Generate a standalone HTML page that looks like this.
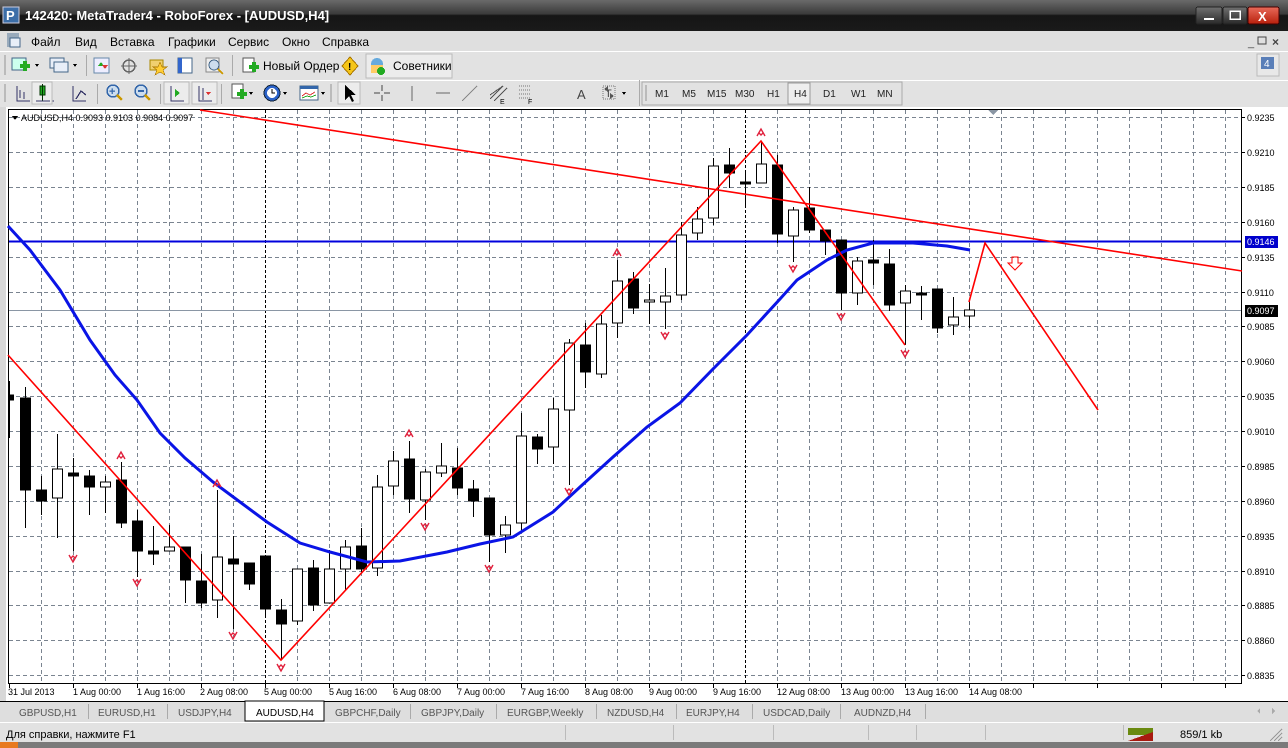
<!DOCTYPE html>
<html><head><meta charset="utf-8"><style>
html,body{margin:0;padding:0;width:1288px;height:748px;overflow:hidden;background:#d4d0c8}
svg{display:block}
text{font-family:"Liberation Sans","DejaVu Sans",sans-serif}
</style></head><body>
<svg width="1288" height="748" viewBox="0 0 1288 748" xmlns="http://www.w3.org/2000/svg" shape-rendering="crispEdges">
<defs>
<linearGradient id="tg" x1="0" y1="0" x2="0" y2="1"><stop offset="0" stop-color="#6a6a6a"/><stop offset="0.45" stop-color="#3a3a3a"/><stop offset="0.5" stop-color="#151515"/><stop offset="1" stop-color="#1a1a1a"/></linearGradient>
<linearGradient id="rb" x1="0" y1="0" x2="0" y2="1"><stop offset="0" stop-color="#e86a5a"/><stop offset="1" stop-color="#b8200c"/></linearGradient>
<linearGradient id="gb" x1="0" y1="0" x2="0" y2="1"><stop offset="0" stop-color="#707070"/><stop offset="1" stop-color="#2a2a2a"/></linearGradient>
</defs>
<!-- title bar -->
<rect x="0" y="0" width="1288" height="31" fill="url(#tg)"/>
<rect x="3" y="7" width="16" height="16" fill="#3c6ea8" stroke="#ccd" />
<text x="6" y="20" font-size="13" font-weight="bold" fill="#fff">P</text>
<text x="25" y="20" font-size="13" font-weight="bold" fill="#fff">142420: MetaTrader4 - RoboForex - [AUDUSD,H4]</text>
<rect x="1196" y="7" width="26" height="17" rx="2" fill="url(#gb)" stroke="#222"/>
<rect x="1204" y="18" width="10" height="2" fill="#fff"/>
<rect x="1223" y="7" width="24" height="17" rx="2" fill="url(#gb)" stroke="#222"/>
<rect x="1230" y="11" width="10" height="8" fill="none" stroke="#fff" stroke-width="1.5"/>
<rect x="1248" y="7" width="31" height="17" rx="2" fill="url(#rb)" stroke="#400"/>
<text x="1258" y="21" font-size="13" font-weight="bold" fill="#fff">X</text>
<!-- menu -->
<rect x="0" y="31" width="1288" height="20" fill="#dfdfdf"/>
<rect x="7" y="33" width="12" height="14" fill="#9ab" /><rect x="10" y="38" width="10" height="9" fill="#e8eef8" stroke="#468"/>
<g font-size="12" fill="#000">
<text x="31" y="46">Файл</text><text x="75" y="46">Вид</text><text x="110" y="46">Вставка</text><text x="168" y="46">Графики</text><text x="228" y="46">Сервис</text><text x="282" y="46">Окно</text><text x="322" y="46">Справка</text>
</g>
<text x="1248" y="46" font-size="11" fill="#444">_</text>
<rect x="1258" y="37" width="8" height="7" fill="none" stroke="#444"/>
<text x="1272" y="46" font-size="12" font-weight="bold" fill="#444">×</text>
<!-- toolbar 1 -->
<rect x="0" y="51" width="1288" height="29" fill="#e2e2e2"/>
<line x1="0" y1="51.5" x2="1288" y2="51.5" stroke="#fff"/>
<rect x="4" y="55" width="2" height="20" fill="#bbb"/>
<rect x="12" y="58" width="14" height="12" fill="#cfe" stroke="#468"/><rect x="20" y="64" width="10" height="4" fill="#2a2"/><rect x="23" y="61" width="4" height="10" fill="#2a2"/>
<path d="M35 64 l4 0 l-2 3z" fill="#000"/>
<rect x="50" y="58" width="14" height="10" fill="#e8eef8" stroke="#468"/><rect x="54" y="62" width="14" height="10" fill="#e8eef8" stroke="#468"/>
<path d="M73 64 l4 0 l-2 3z" fill="#000"/>
<rect x="86" y="55" width="1" height="21" fill="#aaa"/>
<rect x="94" y="58" width="15" height="15" fill="#eef" stroke="#68a"/><path d="M98 66 l3 -4 l3 4z" fill="#2a2"/><path d="M102 65 l3 4 l3 -4z" fill="#d33"/>
<circle cx="129" cy="66" r="6" fill="none" stroke="#666" stroke-width="1.5"/><line x1="121" y1="66" x2="137" y2="66" stroke="#666"/><line x1="129" y1="58" x2="129" y2="74" stroke="#666"/>
<rect x="150" y="60" width="13" height="10" fill="#f0d070" stroke="#a80"/><path d="M160 62 l2 5 5 0 -4 3 2 5 -5 -3 -5 3 2 -5 -4 -3 5 0z" fill="#fc3" stroke="#a70" stroke-width=".6"/>
<rect x="178" y="58" width="14" height="15" fill="#fff" stroke="#468"/><rect x="178" y="58" width="4" height="15" fill="#36c"/>
<rect x="206" y="58" width="13" height="14" fill="#eee" stroke="#888"/><circle cx="214" cy="65" r="5" fill="#cde" stroke="#468"/><line x1="218" y1="69" x2="223" y2="74" stroke="#c90" stroke-width="2"/>
<rect x="232" y="55" width="1" height="21" fill="#aaa"/>
<rect x="243" y="58" width="11" height="14" fill="#fff" stroke="#555"/><rect x="249" y="65" width="10" height="4" fill="#2a2"/><rect x="252" y="62" width="4" height="10" fill="#2a2"/>
<text x="263" y="70" font-size="12">Новый Ордер</text>
<path d="M350 57 l8 9 -8 9 -8 -9z" fill="#f5c518" stroke="#a70"/><text x="348" y="70" font-size="10" font-weight="bold">!</text>
<rect x="366" y="54" width="86" height="24" fill="#ececec" stroke="#bbb"/>
<circle cx="377" cy="64" r="6" fill="#6ad"/><rect x="371" y="65" width="12" height="8" fill="#fc6"/><circle cx="381" cy="71" r="4" fill="#2a2"/>
<text x="393" y="70" font-size="12">Советники</text>
<rect x="1257" y="54" width="22" height="22" fill="#e8e8e8" stroke="#bbb"/><rect x="1261" y="57" width="13" height="12" fill="#5a7fb8"/><text x="1264" y="67" font-size="10" fill="#fff">4</text>
<!-- toolbar 2 -->
<rect x="0" y="80" width="1288" height="27" fill="#e2e2e2"/>
<line x1="0" y1="80.5" x2="1288" y2="80.5" stroke="#fff"/>
<rect x="4" y="84" width="2" height="18" fill="#bbb"/>
<g stroke="#336" fill="none" stroke-width="1.3">
<path d="M17 86 v15 h13 M20 98 v-8 M24 92 v7"/>
<path d="M41 86 v15 h13"/><path d="M73 86 v15 h13 M76 99 l5 -8 5 4"/>
</g>
<rect x="32" y="82" width="20" height="22" fill="#ececec" stroke="#bbb"/><rect x="40" y="86" width="5" height="9" fill="#2a2" stroke="#030"/><line x1="42.5" y1="84" x2="42.5" y2="101" stroke="#030"/><line x1="36" y1="101" x2="50" y2="101" stroke="#336"/>
<rect x="97" y="84" width="1" height="20" fill="#aaa"/>
<circle cx="113" cy="91" r="6" fill="#cde" stroke="#36a" stroke-width="1.5"/><line x1="117" y1="95" x2="122" y2="100" stroke="#c90" stroke-width="2.5"/><text x="109" y="95" font-size="11" font-weight="bold" fill="#36a">+</text>
<circle cx="141" cy="91" r="6" fill="#cde" stroke="#36a" stroke-width="1.5"/><line x1="145" y1="95" x2="150" y2="100" stroke="#c90" stroke-width="2.5"/><rect x="138" y="90" width="6" height="2" fill="#36a"/>
<rect x="160" y="84" width="1" height="20" fill="#aaa"/>
<rect x="164" y="82" width="25" height="22" fill="#ececec" stroke="#bbb"/><path d="M171 86 v15 h13" stroke="#336" fill="none" stroke-width="1.3"/><path d="M175 89 l5 4 -5 4z" fill="#2a2"/>
<rect x="192" y="82" width="25" height="22" fill="#ececec" stroke="#bbb"/><path d="M199 86 v15 h13 M203 88 v12" stroke="#336" fill="none" stroke-width="1.3"/><path d="M206 92 l5 0 -3 3z" fill="#d33"/>
<rect x="221" y="84" width="1" height="20" fill="#aaa"/>
<rect x="232" y="84" width="11" height="14" fill="#fff" stroke="#555"/><rect x="237" y="92" width="10" height="4" fill="#2a2"/><rect x="240" y="89" width="4" height="10" fill="#2a2"/><path d="M249 92 l4 0 -2 3z"/>
<circle cx="272" cy="93" r="8" fill="#2b62c8" stroke="#123"/><circle cx="272" cy="93" r="5" fill="#fff"/><path d="M272 89 v4 h3" stroke="#000" fill="none"/><path d="M283 92 l4 0 -2 3z"/>
<rect x="300" y="86" width="18" height="14" fill="#fff" stroke="#468"/><rect x="300" y="86" width="18" height="3" fill="#36a"/><path d="M302 96 l4 -3 4 2 5 -3" stroke="#d33" fill="none"/><path d="M302 98 l5 -2 4 1 5 -2" stroke="#2a2" fill="none"/><path d="M321 92 l4 0 -2 3z"/>
<rect x="330" y="84" width="2" height="18" fill="#bbb"/>
<rect x="338" y="82" width="22" height="22" fill="#ececec" stroke="#bbb"/><path d="M345 85 v15 l4 -4 3 6 2 -1 -3 -6 5 0z" fill="#000"/>
<path d="M374 93 h6 m4 0 h6 M382 85 v6 m0 4 v6" stroke="#444"/>
<line x1="412" y1="86" x2="412" y2="101" stroke="#666"/>
<line x1="436" y1="93" x2="450" y2="93" stroke="#666"/>
<line x1="462" y1="101" x2="477" y2="86" stroke="#888"/>
<path d="M490 99 l13 -13 M494 101 l13 -13 M490 95 l13 -9" stroke="#555"/><text x="500" y="104" font-size="7">E</text>
<path d="M519 86 h12 M519 90 h12 M519 94 h12 M519 98 h12" stroke="#777" stroke-dasharray="1 1"/><text x="528" y="104" font-size="7">F</text>
<text x="577" y="99" font-size="13" fill="#444">A</text>
<rect x="603" y="86" width="12" height="13" fill="none" stroke="#777" stroke-dasharray="1 1"/><text x="605" y="97" font-size="11" fill="#444">T</text>
<path d="M606 92 l0 0" /><path d="M604 89 l4 -3 0 6z M614 96 l-4 3 0 -6z" fill="#555"/><path d="M622 92 l4 0 -2 3z"/>
<rect x="639" y="80" width="1" height="26" fill="#aaa"/>
<rect x="642" y="82" width="260" height="23" fill="#e2e2e2" stroke="#aaa"/>
<rect x="645" y="85" width="2" height="16" fill="#bbb"/>
<rect x="788" y="83" width="22" height="21" fill="#eee" stroke="#999"/>
<g font-size="10" fill="#222">
<text x="655" y="97">M1</text><text x="682" y="97">M5</text><text x="707" y="97">M15</text><text x="735" y="97">M30</text><text x="767" y="97">H1</text><text x="794" y="97">H4</text><text x="823" y="97">D1</text><text x="851" y="97">W1</text><text x="877" y="97">MN</text>
</g>
<!-- chart area -->
<rect x="0" y="107" width="1288" height="594" fill="#fff"/>
<rect x="0" y="107" width="6" height="594" fill="#d8d8d8"/>
<rect x="8.5" y="109.5" width="1233" height="574" fill="#fff" stroke="#000"/>
<g stroke="#7a8490" stroke-dasharray="4 3" stroke-width="1">
<line x1="9" y1="117.5" x2="1241" y2="117.5"/><line x1="9" y1="152.5" x2="1241" y2="152.5"/><line x1="9" y1="187.5" x2="1241" y2="187.5"/><line x1="9" y1="222.5" x2="1241" y2="222.5"/><line x1="9" y1="257.5" x2="1241" y2="257.5"/><line x1="9" y1="292.5" x2="1241" y2="292.5"/><line x1="9" y1="326.5" x2="1241" y2="326.5"/><line x1="9" y1="361.5" x2="1241" y2="361.5"/><line x1="9" y1="396.5" x2="1241" y2="396.5"/><line x1="9" y1="431.5" x2="1241" y2="431.5"/><line x1="9" y1="466.5" x2="1241" y2="466.5"/><line x1="9" y1="501.5" x2="1241" y2="501.5"/><line x1="9" y1="536.5" x2="1241" y2="536.5"/><line x1="9" y1="571.5" x2="1241" y2="571.5"/><line x1="9" y1="605.5" x2="1241" y2="605.5"/><line x1="9" y1="640.5" x2="1241" y2="640.5"/><line x1="9" y1="675.5" x2="1241" y2="675.5"/>
<line x1="41.5" y1="110" x2="41.5" y2="683"/><line x1="73.5" y1="110" x2="73.5" y2="683"/><line x1="105.5" y1="110" x2="105.5" y2="683"/><line x1="137.5" y1="110" x2="137.5" y2="683"/><line x1="169.5" y1="110" x2="169.5" y2="683"/><line x1="201.5" y1="110" x2="201.5" y2="683"/><line x1="233.5" y1="110" x2="233.5" y2="683"/><line x1="297.5" y1="110" x2="297.5" y2="683"/><line x1="329.5" y1="110" x2="329.5" y2="683"/><line x1="361.5" y1="110" x2="361.5" y2="683"/><line x1="393.5" y1="110" x2="393.5" y2="683"/><line x1="425.5" y1="110" x2="425.5" y2="683"/><line x1="457.5" y1="110" x2="457.5" y2="683"/><line x1="489.5" y1="110" x2="489.5" y2="683"/><line x1="521.5" y1="110" x2="521.5" y2="683"/><line x1="553.5" y1="110" x2="553.5" y2="683"/><line x1="585.5" y1="110" x2="585.5" y2="683"/><line x1="617.5" y1="110" x2="617.5" y2="683"/><line x1="649.5" y1="110" x2="649.5" y2="683"/><line x1="681.5" y1="110" x2="681.5" y2="683"/><line x1="713.5" y1="110" x2="713.5" y2="683"/><line x1="777.5" y1="110" x2="777.5" y2="683"/><line x1="809.5" y1="110" x2="809.5" y2="683"/><line x1="841.5" y1="110" x2="841.5" y2="683"/><line x1="873.5" y1="110" x2="873.5" y2="683"/><line x1="905.5" y1="110" x2="905.5" y2="683"/><line x1="937.5" y1="110" x2="937.5" y2="683"/><line x1="969.5" y1="110" x2="969.5" y2="683"/><line x1="1001.5" y1="110" x2="1001.5" y2="683"/><line x1="1033.5" y1="110" x2="1033.5" y2="683"/><line x1="1065.5" y1="110" x2="1065.5" y2="683"/><line x1="1097.5" y1="110" x2="1097.5" y2="683"/><line x1="1129.5" y1="110" x2="1129.5" y2="683"/><line x1="1161.5" y1="110" x2="1161.5" y2="683"/><line x1="1193.5" y1="110" x2="1193.5" y2="683"/><line x1="1225.5" y1="110" x2="1225.5" y2="683"/>
</g>
<g stroke="#000" stroke-dasharray="3 2"><line x1="265.5" y1="110" x2="265.5" y2="683"/><line x1="745.5" y1="110" x2="745.5" y2="683"/></g>
<path d="M988 110 h10 l-5 5z" fill="#8a96a4"/>
<!-- price lines -->
<line x1="9" y1="310.5" x2="1241" y2="310.5" stroke="#8a96a4"/>
<line x1="9" y1="241.5" x2="1241" y2="241.5" stroke="#0000dd" stroke-width="2"/>
<!-- candles -->
<g stroke="#000" shape-rendering="crispEdges">
<line x1="9.5" y1="381" x2="9.5" y2="438"/><rect x="8.5" y="395" width="5" height="5" fill="#000"/>
<line x1="25.5" y1="387" x2="25.5" y2="528"/><rect x="20.5" y="398" width="10" height="92" fill="#000"/>
<line x1="41.5" y1="476" x2="41.5" y2="515"/><rect x="36.5" y="490" width="10" height="11" fill="#000"/>
<line x1="57.5" y1="434" x2="57.5" y2="538"/><rect x="52.5" y="469" width="10" height="29" fill="#fff"/>
<line x1="73.5" y1="458" x2="73.5" y2="551"/><rect x="68.5" y="473" width="10" height="3" fill="#000"/>
<line x1="89.5" y1="470" x2="89.5" y2="515"/><rect x="84.5" y="476" width="10" height="11" fill="#000"/>
<line x1="105.5" y1="476" x2="105.5" y2="513"/><rect x="100.5" y="482" width="10" height="5" fill="#fff"/>
<line x1="121.5" y1="462" x2="121.5" y2="528"/><rect x="116.5" y="480" width="10" height="43" fill="#000"/>
<line x1="137.5" y1="510" x2="137.5" y2="577"/><rect x="132.5" y="521" width="10" height="30" fill="#000"/>
<line x1="153.5" y1="526" x2="153.5" y2="565"/><rect x="148.5" y="551" width="10" height="3" fill="#000"/>
<line x1="169.5" y1="525" x2="169.5" y2="551"/><rect x="164.5" y="547" width="10" height="4" fill="#fff"/>
<line x1="185.5" y1="547" x2="185.5" y2="603"/><rect x="180.5" y="547" width="10" height="33" fill="#000"/>
<line x1="201.5" y1="554" x2="201.5" y2="608"/><rect x="196.5" y="581" width="10" height="22" fill="#000"/>
<line x1="217.5" y1="490" x2="217.5" y2="618"/><rect x="212.5" y="557" width="10" height="43" fill="#fff"/>
<line x1="233.5" y1="536" x2="233.5" y2="629"/><rect x="228.5" y="559" width="10" height="5" fill="#000"/>
<line x1="249.5" y1="563" x2="249.5" y2="590"/><rect x="244.5" y="563" width="10" height="21" fill="#000"/>
<line x1="265.5" y1="556" x2="265.5" y2="616"/><rect x="260.5" y="556" width="10" height="53" fill="#000"/>
<line x1="281.5" y1="599" x2="281.5" y2="660"/><rect x="276.5" y="610" width="10" height="14" fill="#000"/>
<line x1="297.5" y1="569" x2="297.5" y2="625"/><rect x="292.5" y="569" width="10" height="52" fill="#fff"/>
<line x1="313.5" y1="560" x2="313.5" y2="611"/><rect x="308.5" y="568" width="10" height="37" fill="#000"/>
<line x1="329.5" y1="550" x2="329.5" y2="603"/><rect x="324.5" y="569" width="10" height="34" fill="#fff"/>
<line x1="345.5" y1="540" x2="345.5" y2="590"/><rect x="340.5" y="547" width="10" height="22" fill="#fff"/>
<line x1="361.5" y1="528" x2="361.5" y2="572"/><rect x="356.5" y="546" width="10" height="23" fill="#000"/>
<line x1="377.5" y1="475" x2="377.5" y2="576"/><rect x="372.5" y="487" width="10" height="81" fill="#fff"/>
<line x1="393.5" y1="451" x2="393.5" y2="495"/><rect x="388.5" y="461" width="10" height="25" fill="#fff"/>
<line x1="409.5" y1="441" x2="409.5" y2="513"/><rect x="404.5" y="459" width="10" height="40" fill="#000"/>
<line x1="425.5" y1="469" x2="425.5" y2="520"/><rect x="420.5" y="472" width="10" height="28" fill="#fff"/>
<line x1="441.5" y1="443" x2="441.5" y2="477"/><rect x="436.5" y="466" width="10" height="7" fill="#fff"/>
<line x1="457.5" y1="448" x2="457.5" y2="495"/><rect x="452.5" y="468" width="10" height="20" fill="#000"/>
<line x1="473.5" y1="480" x2="473.5" y2="517"/><rect x="468.5" y="489" width="10" height="12" fill="#000"/>
<line x1="489.5" y1="498" x2="489.5" y2="562"/><rect x="484.5" y="498" width="10" height="37" fill="#000"/>
<line x1="505.5" y1="516" x2="505.5" y2="553"/><rect x="500.5" y="525" width="10" height="10" fill="#fff"/>
<line x1="521.5" y1="413" x2="521.5" y2="530"/><rect x="516.5" y="436" width="10" height="87" fill="#fff"/>
<line x1="537.5" y1="434" x2="537.5" y2="464"/><rect x="532.5" y="437" width="10" height="12" fill="#000"/>
<line x1="553.5" y1="398" x2="553.5" y2="464"/><rect x="548.5" y="409" width="10" height="38" fill="#fff"/>
<line x1="569.5" y1="339" x2="569.5" y2="485"/><rect x="564.5" y="343" width="10" height="67" fill="#fff"/>
<line x1="585.5" y1="323" x2="585.5" y2="388"/><rect x="580.5" y="345" width="10" height="27" fill="#000"/>
<line x1="601.5" y1="315" x2="601.5" y2="378"/><rect x="596.5" y="324" width="10" height="50" fill="#fff"/>
<line x1="617.5" y1="260" x2="617.5" y2="338"/><rect x="612.5" y="281" width="10" height="42" fill="#fff"/>
<line x1="633.5" y1="272" x2="633.5" y2="314"/><rect x="628.5" y="279" width="10" height="29" fill="#000"/>
<line x1="649.5" y1="284" x2="649.5" y2="324"/><rect x="644.5" y="300" width="10" height="2" fill="#fff"/>
<line x1="665.5" y1="268" x2="665.5" y2="329"/><rect x="660.5" y="296" width="10" height="6" fill="#fff"/>
<line x1="681.5" y1="222" x2="681.5" y2="300"/><rect x="676.5" y="235" width="10" height="60" fill="#fff"/>
<line x1="697.5" y1="207" x2="697.5" y2="240"/><rect x="692.5" y="219" width="10" height="14" fill="#fff"/>
<line x1="713.5" y1="158" x2="713.5" y2="225"/><rect x="708.5" y="166" width="10" height="52" fill="#fff"/>
<line x1="729.5" y1="148" x2="729.5" y2="188"/><rect x="724.5" y="165" width="10" height="8" fill="#000"/>
<line x1="745.5" y1="170" x2="745.5" y2="208"/><rect x="740.5" y="182" width="10" height="2" fill="#000"/>
<line x1="761.5" y1="141" x2="761.5" y2="183"/><rect x="756.5" y="164" width="10" height="19" fill="#fff"/>
<line x1="777.5" y1="155" x2="777.5" y2="243"/><rect x="772.5" y="165" width="10" height="69" fill="#000"/>
<line x1="793.5" y1="207" x2="793.5" y2="262"/><rect x="788.5" y="210" width="10" height="26" fill="#fff"/>
<line x1="809.5" y1="187" x2="809.5" y2="233"/><rect x="804.5" y="208" width="10" height="22" fill="#000"/>
<line x1="825.5" y1="230" x2="825.5" y2="255"/><rect x="820.5" y="230" width="10" height="11" fill="#000"/>
<line x1="841.5" y1="240" x2="841.5" y2="310"/><rect x="836.5" y="240" width="10" height="53" fill="#000"/>
<line x1="857.5" y1="257" x2="857.5" y2="305"/><rect x="852.5" y="261" width="10" height="32" fill="#fff"/>
<line x1="873.5" y1="240" x2="873.5" y2="285"/><rect x="868.5" y="260" width="10" height="3" fill="#000"/>
<line x1="889.5" y1="249" x2="889.5" y2="311"/><rect x="884.5" y="264" width="10" height="41" fill="#000"/>
<line x1="905.5" y1="285" x2="905.5" y2="345"/><rect x="900.5" y="291" width="10" height="12" fill="#fff"/>
<line x1="921.5" y1="286" x2="921.5" y2="320"/><rect x="916.5" y="293" width="10" height="2" fill="#000"/>
<line x1="937.5" y1="289" x2="937.5" y2="333"/><rect x="932.5" y="289" width="10" height="39" fill="#000"/>
<line x1="953.5" y1="297" x2="953.5" y2="335"/><rect x="948.5" y="317" width="10" height="8" fill="#fff"/>
<line x1="969.5" y1="300" x2="969.5" y2="328"/><rect x="964.5" y="310" width="10" height="6" fill="#fff"/>
</g>
<g fill="none" shape-rendering="geometricPrecision">
<!-- MA -->
<path d="M8 226 L30 250 L60 290 L90 340 L115 375 L137 400 L160 433 L185 458 L213 482 L240 502 L267 522 L300 543 L330 552 L367 562 L400 561 L447 552 L480 544 L513 537 L553 512 L580 487 L613 457 L647 427 L680 403 L713 369 L747 335 L780 299 L797 280 L827 260 L847 250 L873 243 L913 243 L947 246 L970 250" stroke="#0a14e6" stroke-width="3"/>
<!-- red lines -->
<g stroke="#f00" stroke-width="1.6">
<line x1="200" y1="110" x2="1242" y2="271"/>
<path d="M8 355 L281 660 L761 141 L905 345"/>
<path d="M969 302 L985 243 L1098 410"/>
</g>
<path d="M1012 257 h6 v6 h4 l-7 7 -7 -7 h4z" stroke="#f00" stroke-width="1"/>
<!-- fractals -->
<g stroke="#e0203c" stroke-width="1.4">
<path d="M117 459 l4 -7 4 7 M119 456 l2 2 2 -2"/>
<path d="M213 487 l4 -7 4 7 M215 484 l2 2 2 -2"/>
<path d="M405 437 l4 -7 4 7 M407 434 l2 2 2 -2"/>
<path d="M613 256 l4 -7 4 7 M615 253 l2 2 2 -2"/>
<path d="M757 136 l4 -7 4 7 M759 133 l2 2 2 -2"/>
<path d="M69 555 l4 7 4 -7 M71 558 l2 -2 2 2"/>
<path d="M133 579 l4 7 4 -7 M135 582 l2 -2 2 2"/>
<path d="M229 632 l4 7 4 -7 M231 635 l2 -2 2 2"/>
<path d="M277 664 l4 7 4 -7 M279 667 l2 -2 2 2"/>
<path d="M421 523 l4 7 4 -7 M423 526 l2 -2 2 2"/>
<path d="M485 565 l4 7 4 -7 M487 568 l2 -2 2 2"/>
<path d="M565 488 l4 7 4 -7 M567 491 l2 -2 2 2"/>
<path d="M661 332 l4 7 4 -7 M663 335 l2 -2 2 2"/>
<path d="M789 265 l4 7 4 -7 M791 268 l2 -2 2 2"/>
<path d="M837 313 l4 7 4 -7 M839 316 l2 -2 2 2"/>
<path d="M901 350 l4 7 4 -7 M903 353 l2 -2 2 2"/>
</g>
</g>
<path d="M12 116 h6 l-3 4z" fill="#000"/>
<text x="21" y="121" font-size="9" fill="#000">AUDUSD,H4  0.9093 0.9103 0.9084 0.9097</text>
<!-- price axis -->
<g stroke="#000"><line x1="1242" y1="117.5" x2="1245" y2="117.5"/><line x1="1242" y1="152.5" x2="1245" y2="152.5"/><line x1="1242" y1="187.5" x2="1245" y2="187.5"/><line x1="1242" y1="222.5" x2="1245" y2="222.5"/><line x1="1242" y1="257.5" x2="1245" y2="257.5"/><line x1="1242" y1="292.5" x2="1245" y2="292.5"/><line x1="1242" y1="326.5" x2="1245" y2="326.5"/><line x1="1242" y1="361.5" x2="1245" y2="361.5"/><line x1="1242" y1="396.5" x2="1245" y2="396.5"/><line x1="1242" y1="431.5" x2="1245" y2="431.5"/><line x1="1242" y1="466.5" x2="1245" y2="466.5"/><line x1="1242" y1="501.5" x2="1245" y2="501.5"/><line x1="1242" y1="536.5" x2="1245" y2="536.5"/><line x1="1242" y1="571.5" x2="1245" y2="571.5"/><line x1="1242" y1="605.5" x2="1245" y2="605.5"/><line x1="1242" y1="640.5" x2="1245" y2="640.5"/><line x1="1242" y1="675.5" x2="1245" y2="675.5"/></g>
<g font-size="9" fill="#000">
<text x="1247" y="121">0.9235</text><text x="1247" y="156">0.9210</text><text x="1247" y="191">0.9185</text><text x="1247" y="226">0.9160</text><text x="1247" y="261">0.9135</text><text x="1247" y="296">0.9110</text><text x="1247" y="330">0.9085</text><text x="1247" y="365">0.9060</text><text x="1247" y="400">0.9035</text><text x="1247" y="435">0.9010</text><text x="1247" y="470">0.8985</text><text x="1247" y="505">0.8960</text><text x="1247" y="540">0.8935</text><text x="1247" y="575">0.8910</text><text x="1247" y="609">0.8885</text><text x="1247" y="644">0.8860</text><text x="1247" y="679">0.8835</text>
</g>
<rect x="1245" y="236" width="33" height="12" fill="#0000cc"/><text x="1247" y="245" font-size="9" fill="#fff">0.9146</text>
<rect x="1245" y="305" width="33" height="12" fill="#000"/><text x="1247" y="314" font-size="9" fill="#fff">0.9097</text>
<!-- date axis -->
<g stroke="#000"><line x1="9.5" y1="684" x2="9.5" y2="688"/><line x1="73.5" y1="684" x2="73.5" y2="688"/><line x1="137.5" y1="684" x2="137.5" y2="688"/><line x1="201.5" y1="684" x2="201.5" y2="688"/><line x1="265.5" y1="684" x2="265.5" y2="688"/><line x1="329.5" y1="684" x2="329.5" y2="688"/><line x1="393.5" y1="684" x2="393.5" y2="688"/><line x1="457.5" y1="684" x2="457.5" y2="688"/><line x1="521.5" y1="684" x2="521.5" y2="688"/><line x1="585.5" y1="684" x2="585.5" y2="688"/><line x1="649.5" y1="684" x2="649.5" y2="688"/><line x1="713.5" y1="684" x2="713.5" y2="688"/><line x1="777.5" y1="684" x2="777.5" y2="688"/><line x1="841.5" y1="684" x2="841.5" y2="688"/><line x1="905.5" y1="684" x2="905.5" y2="688"/><line x1="969.5" y1="684" x2="969.5" y2="688"/><line x1="1033.5" y1="684" x2="1033.5" y2="688"/><line x1="1097.5" y1="684" x2="1097.5" y2="688"/><line x1="1161.5" y1="684" x2="1161.5" y2="688"/><line x1="1225.5" y1="684" x2="1225.5" y2="688"/></g>
<g font-size="9" fill="#000">
<text x="8" y="695">31 Jul 2013</text><text x="73" y="695">1 Aug 00:00</text><text x="137" y="695">1 Aug 16:00</text><text x="200" y="695">2 Aug 08:00</text><text x="264" y="695">5 Aug 00:00</text><text x="329" y="695">5 Aug 16:00</text><text x="393" y="695">6 Aug 08:00</text><text x="457" y="695">7 Aug 00:00</text><text x="521" y="695">7 Aug 16:00</text><text x="585" y="695">8 Aug 08:00</text><text x="649" y="695">9 Aug 00:00</text><text x="713" y="695">9 Aug 16:00</text><text x="777" y="695">12 Aug 08:00</text><text x="841" y="695">13 Aug 00:00</text><text x="905" y="695">13 Aug 16:00</text><text x="969" y="695">14 Aug 08:00</text>
</g>
<!-- tabs -->
<rect x="0" y="701" width="1288" height="21" fill="#dedede"/>
<line x1="0" y1="701.5" x2="1288" y2="701.5" stroke="#000"/>
<rect x="245" y="701" width="79" height="20" fill="#fff" stroke="#000"/>
<g stroke="#aaa"><line x1="88.5" y1="704" x2="88.5" y2="719"/><line x1="167.5" y1="704" x2="167.5" y2="719"/><line x1="410.5" y1="704" x2="410.5" y2="719"/><line x1="496.5" y1="704" x2="496.5" y2="719"/><line x1="596.5" y1="704" x2="596.5" y2="719"/><line x1="676.5" y1="704" x2="676.5" y2="719"/><line x1="752.5" y1="704" x2="752.5" y2="719"/><line x1="840.5" y1="704" x2="840.5" y2="719"/><line x1="925.5" y1="704" x2="925.5" y2="719"/></g>
<g font-size="10" fill="#555">
<text x="19" y="716">GBPUSD,H1</text><text x="98" y="716">EURUSD,H1</text><text x="178" y="716">USDJPY,H4</text><text x="256" y="716" fill="#000">AUDUSD,H4</text><text x="335" y="716">GBPCHF,Daily</text><text x="421" y="716">GBPJPY,Daily</text><text x="507" y="716">EURGBP,Weekly</text><text x="607" y="716">NZDUSD,H4</text><text x="686" y="716">EURJPY,H4</text><text x="763" y="716">USDCAD,Daily</text><text x="854" y="716">AUDNZD,H4</text>
</g>
<path d="M1260 708 v6 l-3 -3z M1272 708 v6 l3 -3z" fill="#aaa"/>
<!-- status -->
<rect x="0" y="722" width="1288" height="20" fill="#e2e2e2"/>
<line x1="0" y1="722.5" x2="1288" y2="722.5" stroke="#fff"/>
<text x="6" y="738" font-size="11" fill="#000">Для справки, нажмите F1</text>
<g stroke="#bbb"><line x1="565.5" y1="725" x2="565.5" y2="740"/><line x1="673.5" y1="725" x2="673.5" y2="740"/><line x1="773.5" y1="725" x2="773.5" y2="740"/><line x1="868.5" y1="725" x2="868.5" y2="740"/><line x1="916.5" y1="725" x2="916.5" y2="740"/><line x1="985.5" y1="725" x2="985.5" y2="740"/><line x1="1123.5" y1="725" x2="1123.5" y2="740"/></g>
<g><rect x="1128" y="728" width="25" height="7" fill="#6a8a10"/><path d="M1128 741 l25 -9 v9z" fill="#a81a10"/></g>
<text x="1180" y="738" font-size="11" fill="#000">859/1 kb</text>
<path d="M1270 741 l12 -12 M1274 741 l8 -8 M1278 741 l4 -4" stroke="#999"/>
<rect x="0" y="742" width="1288" height="6" fill="#7a7a7a"/>
<rect x="0" y="742" width="18" height="6" fill="#e87a20"/>
</svg>
</body></html>
